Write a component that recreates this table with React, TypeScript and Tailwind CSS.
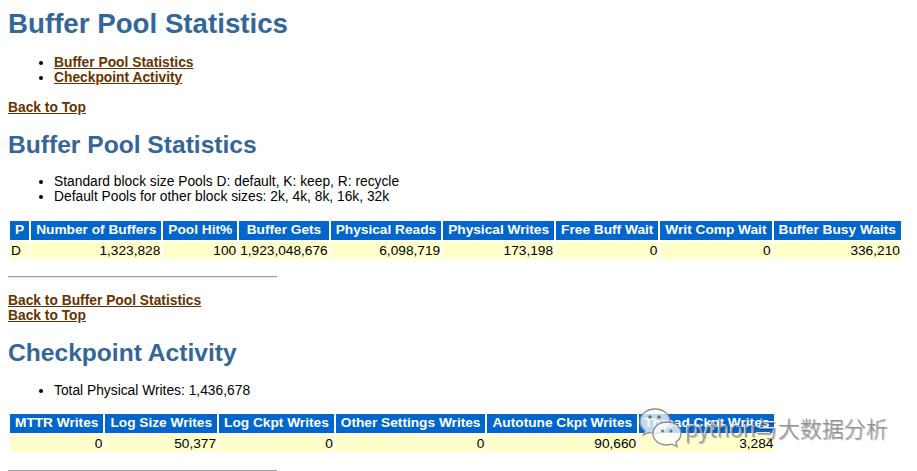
import React from "react";

const link = "font-bold underline text-[#663300]";

function Th({ children }: { children: React.ReactNode }) {
  return (
    <th className="bg-[#0066cc] text-white font-bold text-center px-[5px] pt-[1px] pb-[2px] leading-[16px] whitespace-nowrap">
      {children}
    </th>
  );
}

function Td({ children, left }: { children: React.ReactNode; left?: boolean }) {
  return (
    <td
      className={
        "bg-[#ffffcc] px-[1px] py-[1px] leading-[15px] whitespace-nowrap align-top " +
        (left ? "text-left" : "text-right")
      }
    >
      {children}
    </td>
  );
}

function Hr({ className }: { className: string }) {
  return (
    <div className={"w-[269px] h-[2px] border-t border-t-[#9a9a9a] border-b border-b-[#eeeeee] " + className} />
  );
}

export default function App() {
  return (
    <div className="relative w-[917px] h-[471px] overflow-hidden bg-white">
      <div className="px-[8px] font-['Liberation_Sans',Arial,sans-serif] text-black text-[13.8px] leading-[15px]">
        <h1 className="mt-[7px] text-[27.7px] leading-[33px] font-bold text-[#336699]">
          Buffer Pool Statistics
        </h1>
        <ul className="mt-[14.5px] pl-[46px] list-disc">
          <li>
            <a className={link}>Buffer Pool Statistics</a>
          </li>
          <li>
            <a className={link}>Checkpoint Activity</a>
          </li>
        </ul>
        <div className="mt-[15px]">
          <a className={link}>Back to Top</a>
        </div>
        <h2 className="mt-[16.4px] text-[24.6px] leading-[28px] font-bold text-[#336699]">
          Buffer Pool Statistics
        </h2>
        <ul className="mt-[15.6px] pl-[46px] list-disc">
          <li>Standard block size Pools D: default, K: keep, R: recycle</li>
          <li>Default Pools for other block sizes: 2k, 4k, 8k, 16k, 32k</li>
        </ul>
        <table className="mt-[14.5px] border-separate border-spacing-[2px] text-[13.7px]">
          <thead>
            <tr>
              <Th>P</Th>
              <Th>Number of Buffers</Th>
              <Th>Pool Hit%</Th>
              <Th>Buffer Gets</Th>
              <Th>Physical Reads</Th>
              <Th>Physical Writes</Th>
              <Th>Free Buff Wait</Th>
              <Th>Writ Comp Wait</Th>
              <Th>Buffer Busy Waits</Th>
            </tr>
          </thead>
          <tbody>
            <tr>
              <Td left>D</Td>
              <Td>1,323,828</Td>
              <Td>100</Td>
              <Td>1,923,048,676</Td>
              <Td>6,098,719</Td>
              <Td>173,198</Td>
              <Td>0</Td>
              <Td>0</Td>
              <Td>336,210</Td>
            </tr>
          </tbody>
        </table>
        <Hr className="mt-[15.5px]" />
        <div className="mt-[15px]">
          <a className={link}>Back to Buffer Pool Statistics</a>
        </div>
        <div>
          <a className={link}>Back to Top</a>
        </div>
        <h2 className="mt-[15.5px] text-[24.6px] leading-[28px] font-bold text-[#336699]">
          Checkpoint Activity
        </h2>
        <ul className="mt-[16px] pl-[46px] list-disc">
          <li>Total Physical Writes: 1,436,678</li>
        </ul>
        <table className="mt-[13.8px] border-separate border-spacing-[2px] text-[13.7px]">
          <thead>
            <tr>
              <Th>MTTR Writes</Th>
              <Th>Log Size Writes</Th>
              <Th>Log Ckpt Writes</Th>
              <Th>Other Settings Writes</Th>
              <Th>Autotune Ckpt Writes</Th>
              <Th>Thread Ckpt Writes</Th>
            </tr>
          </thead>
          <tbody>
            <tr>
              <Td>0</Td>
              <Td>50,377</Td>
              <Td>0</Td>
              <Td>0</Td>
              <Td>90,660</Td>
              <Td>3,284</Td>
            </tr>
          </tbody>
        </table>
        <Hr className="mt-[16px]" />
      </div>

      {/* watermark */}
      <div className="absolute left-[638px] top-[406px] flex items-center pointer-events-none">
        <svg width="46" height="44" viewBox="0 0 46 44">
          <g fill="rgba(255,255,255,0.75)" stroke="#8c8c8c" strokeWidth="1.3">
            <path d="M17 3 C8 3 2 9 2 15.5 C2 19.5 4 22.5 7 24.5 L5.5 29 L11 26.5 C13 27.2 15 27.5 17 27.5 C26 27.5 32 21.5 32 15.5 C32 9 26 3 17 3 Z" />
            <path d="M29 16 C21 16 15 21 15 27.5 C15 34 21 39 29 39 C30.8 39 32.5 38.7 34 38.2 L39 40.5 L37.8 36 C41 34 43 31 43 27.5 C43 21 37 16 29 16 Z" />
          </g>
          <g fill="#707070">
            <circle cx="12" cy="11" r="1.8" />
            <circle cx="21" cy="11" r="1.8" />
            <circle cx="24.5" cy="25" r="1.5" />
            <circle cx="33" cy="25" r="1.5" />
          </g>
        </svg>
        <span className="ml-[1px] -mt-[2px] font-['Noto_Sans_CJK_SC',sans-serif] font-light text-[22px] leading-[26px] text-[#939393] [text-shadow:1px_1px_1px_rgba(0,0,0,0.35),-1px_-1px_0_rgba(255,255,255,0.9)]">
          python与大数据分析
        </span>
      </div>
    </div>
  );
}
